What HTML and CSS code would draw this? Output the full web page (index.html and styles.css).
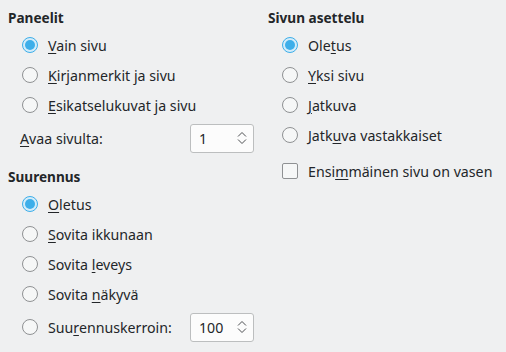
FILE: index.html
```html
<!DOCTYPE html>
<html>
<head>
<meta charset="utf-8">
<link rel="stylesheet" href="styles.css">
</head>
<body>
<div class="page">
  <div class="col left">
    <div class="heading">Paneelit</div>
    <div class="row"><span class="radio checked"></span><span class="label"><u>V</u>ain sivu</span></div>
    <div class="row"><span class="radio"></span><span class="label"><u>K</u>irjanmerkit ja sivu</span></div>
    <div class="row"><span class="radio"></span><span class="label"><u>E</u>sikatselukuvat ja sivu</span></div>
    <div class="spinrow">
      <span class="spinlabel"><u>A</u>vaa sivulta:</span>
      <div class="spin"><span class="val">1</span>
        <svg class="arrows" width="10" height="14" viewBox="0 0 10 14"><path d="M1 5.5 L5 1.5 L9 5.5 M1 8.5 L5 12.5 L9 8.5" fill="none" stroke="#4d4f52" stroke-width="1"/></svg>
      </div>
    </div>
    <div class="heading h2">Suurennus</div>
    <div class="row"><span class="radio checked"></span><span class="label"><u>O</u>letus</span></div>
    <div class="row"><span class="radio"></span><span class="label"><u>S</u>ovita ikkunaan</span></div>
    <div class="row"><span class="radio"></span><span class="label">Sovita <u>l</u>eveys</span></div>
    <div class="row"><span class="radio"></span><span class="label">Sovita <u>n</u>äkyvä</span></div>
    <div class="spinrow zoomrow">
      <span class="radio"></span><span class="label">Suu<u>r</u>ennuskerroin:</span>
      <div class="spin"><span class="val">100</span>
        <svg class="arrows" width="10" height="14" viewBox="0 0 10 14"><path d="M1 5.5 L5 1.5 L9 5.5 M1 8.5 L5 12.5 L9 8.5" fill="none" stroke="#4d4f52" stroke-width="1"/></svg>
      </div>
    </div>
  </div>
  <div class="col right">
    <div class="heading">Sivun asettelu</div>
    <div class="row"><span class="radio checked"></span><span class="label">Ole<u>t</u>us</span></div>
    <div class="row"><span class="radio"></span><span class="label"><u>Y</u>ksi sivu</span></div>
    <div class="row"><span class="radio"></span><span class="label"><u>J</u>atkuva</span></div>
    <div class="row"><span class="radio"></span><span class="label">Jatk<u>u</u>va vastakkaiset</span></div>
    <div class="row checkrow"><span class="check"></span><span class="label">Ensi<u>m</u>mäinen sivu on vasen</span></div>
  </div>
</div>
</body>
</html>
```

FILE: styles.css
```css
html, body {
  margin: 0;
  padding: 0;
  background: #eff0f1;
}
body {
  font-family: "Noto Sans", "DejaVu Sans", sans-serif;
  font-size: 14.2px;
  color: #232629;
}
.page {
  display: flex;
  padding: 8px 0 0 8px;
}
.col {
  display: flex;
  flex-direction: column;
}
.left {
  width: 246px;
}
.right {
  margin-left: 14px;
}
.heading {
  font-weight: bold;
  font-size: 13.6px;
  height: 20px;
  line-height: 20px;
  margin-bottom: 2px;
}
.h2 {
  margin-top: 11px;
}
.row {
  display: flex;
  align-items: center;
  height: 30px;
  padding-left: 14px;
}
u {
  text-decoration: underline;
  text-decoration-thickness: 1px;
  text-underline-offset: 2px;
}
.radio {
  box-sizing: border-box;
  width: 16px;
  height: 16px;
  border-radius: 50%;
  border: 1px solid #8f9193;
  background: #f6f7f7;
  flex: none;
  position: relative;
}
.radio.checked {
  border-color: #3daee9;
  background: #d3ecfa;
}
.radio.checked::after {
  content: "";
  position: absolute;
  left: 2px;
  top: 2px;
  width: 10px;
  height: 10px;
  border-radius: 50%;
  background: #3daee9;
}
.check {
  box-sizing: border-box;
  width: 16px;
  height: 16px;
  border-radius: 2px;
  border: 1px solid #8f9193;
  background: #f6f7f7;
  flex: none;
}
.label {
  margin-left: 10px;
  white-space: nowrap;
}
.checkrow {
  margin-top: 6px;
}
.spinrow {
  display: flex;
  align-items: center;
  height: 36px;
}
.spinlabel {
  margin-left: 12px;
  flex: 1;
}
.zoomrow {
  padding-left: 14px;
}
.zoomrow .label {
  flex: 1;
}
.spin {
  box-sizing: border-box;
  width: 64px;
  height: 29px;
  background: #fcfcfc;
  border: 1px solid #bcbebf;
  border-radius: 3px;
  display: flex;
  align-items: center;
  justify-content: space-between;
  padding: 0 6px 0 8px;
}
.arrows {
  display: block;
}
```
